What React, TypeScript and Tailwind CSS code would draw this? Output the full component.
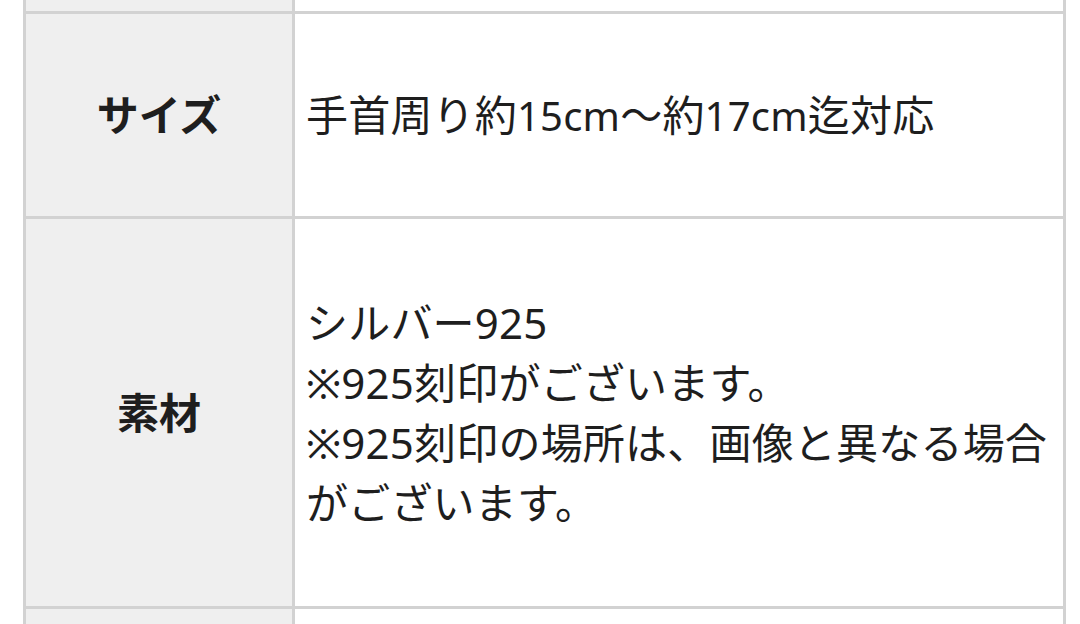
import React from "react";

const font = { fontFamily: '"Noto Sans", "Noto Sans CJK JP", sans-serif' };

export default function App() {
  return (
    <div className="w-[1080px] h-[624px] overflow-hidden bg-white" style={font}>
      <div className="ml-[23px] mt-[-3px] w-[1043px] border-[3px] border-[#d2d2d2] flex flex-col text-[#1e1e1e]">
        <div className="flex h-[14px] border-b-[3px] border-[#d2d2d2]">
          <div className="w-[269px] bg-[#efefef] border-r-[3px] border-[#d2d2d2]" />
          <div className="flex-1 bg-white" />
        </div>
        <div className="flex h-[205px] border-b-[3px] border-[#d2d2d2]">
          <div className="w-[269px] bg-[#efefef] border-r-[3px] border-[#d2d2d2] flex items-center justify-center font-bold text-[42px] leading-[60px]">
            サイズ
          </div>
          <div className="flex-1 bg-white flex items-center pl-[11px] pr-[10px] text-[42px] leading-[60px] tracking-[0.2px]">
            <div>
              手首周り約<span className="text-[40px]">15cm</span>〜約<span className="text-[40px]">17cm</span>迄対応
            </div>
          </div>
        </div>
        <div className="flex h-[390px] border-b-[3px] border-[#d2d2d2]">
          <div className="w-[269px] bg-[#efefef] border-r-[3px] border-[#d2d2d2] flex items-center justify-center font-bold text-[42px] leading-[60px]">
            素材
          </div>
          <div className="flex-1 bg-white flex items-center pl-[11px] pr-[10px] text-[42px] leading-[60px] tracking-[0.2px]">
            <div>
              シルバー925
              <br />
              ※925刻印がございます。
              <br />
              ※925刻印の場所は、画像と異なる場合がございます。
            </div>
          </div>
        </div>
        <div className="flex h-[40px]">
          <div className="w-[269px] bg-[#efefef] border-r-[3px] border-[#d2d2d2]" />
          <div className="flex-1 bg-white" />
        </div>
      </div>
    </div>
  );
}
